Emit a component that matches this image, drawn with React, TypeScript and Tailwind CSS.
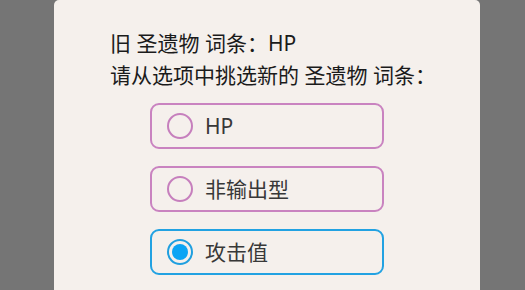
const OPTIONS = [
  { label: 'HP', selected: false },
  { label: '非输出型', selected: false },
  { label: '攻击值', selected: true },
]

function Radio({ selected }: { selected: boolean }) {
  return (
    <span
      className={`flex h-[26px] w-[26px] shrink-0 items-center justify-center rounded-full border-2 ${
        selected ? 'border-[#1f9fdf]' : 'border-[#c67fbd]'
      }`}
    >
      {selected && <span className="h-[16px] w-[16px] rounded-full bg-[#0ba4f4]" />}
    </span>
  )
}

function Option({ label, selected }: { label: string; selected: boolean }) {
  return (
    <div
      className={`flex h-[46px] w-[234px] items-center gap-[12px] rounded-[9px] border-2 pl-[15px] ${
        selected ? 'border-[#22a2e2]' : 'border-[#c983c0]'
      }`}
    >
      <Radio selected={selected} />
      <span className="text-[21px] leading-none text-[#383838]">{label}</span>
    </div>
  )
}

export default function App() {
  return (
    <div
      className="h-[290px] w-[525px] overflow-hidden bg-[#757575]"
      style={{ fontFamily: '"Noto Sans", "Noto Sans CJK SC", sans-serif' }}
    >
      <div className="ml-[54px] h-[320px] w-[426px] rounded-t-[5px] bg-[#f5f0ec] pt-[27px]">
        <div className="pl-[56px] text-[21px] leading-[32px] text-[#1b1b1b]">
          <div>旧 圣遗物 词条：HP</div>
          <div>请从选项中挑选新的 圣遗物 词条：</div>
        </div>
        <div className="mt-[12px] flex flex-col items-center gap-[17px]">
          {OPTIONS.map((o) => (
            <Option key={o.label} label={o.label} selected={o.selected} />
          ))}
        </div>
      </div>
    </div>
  )
}
